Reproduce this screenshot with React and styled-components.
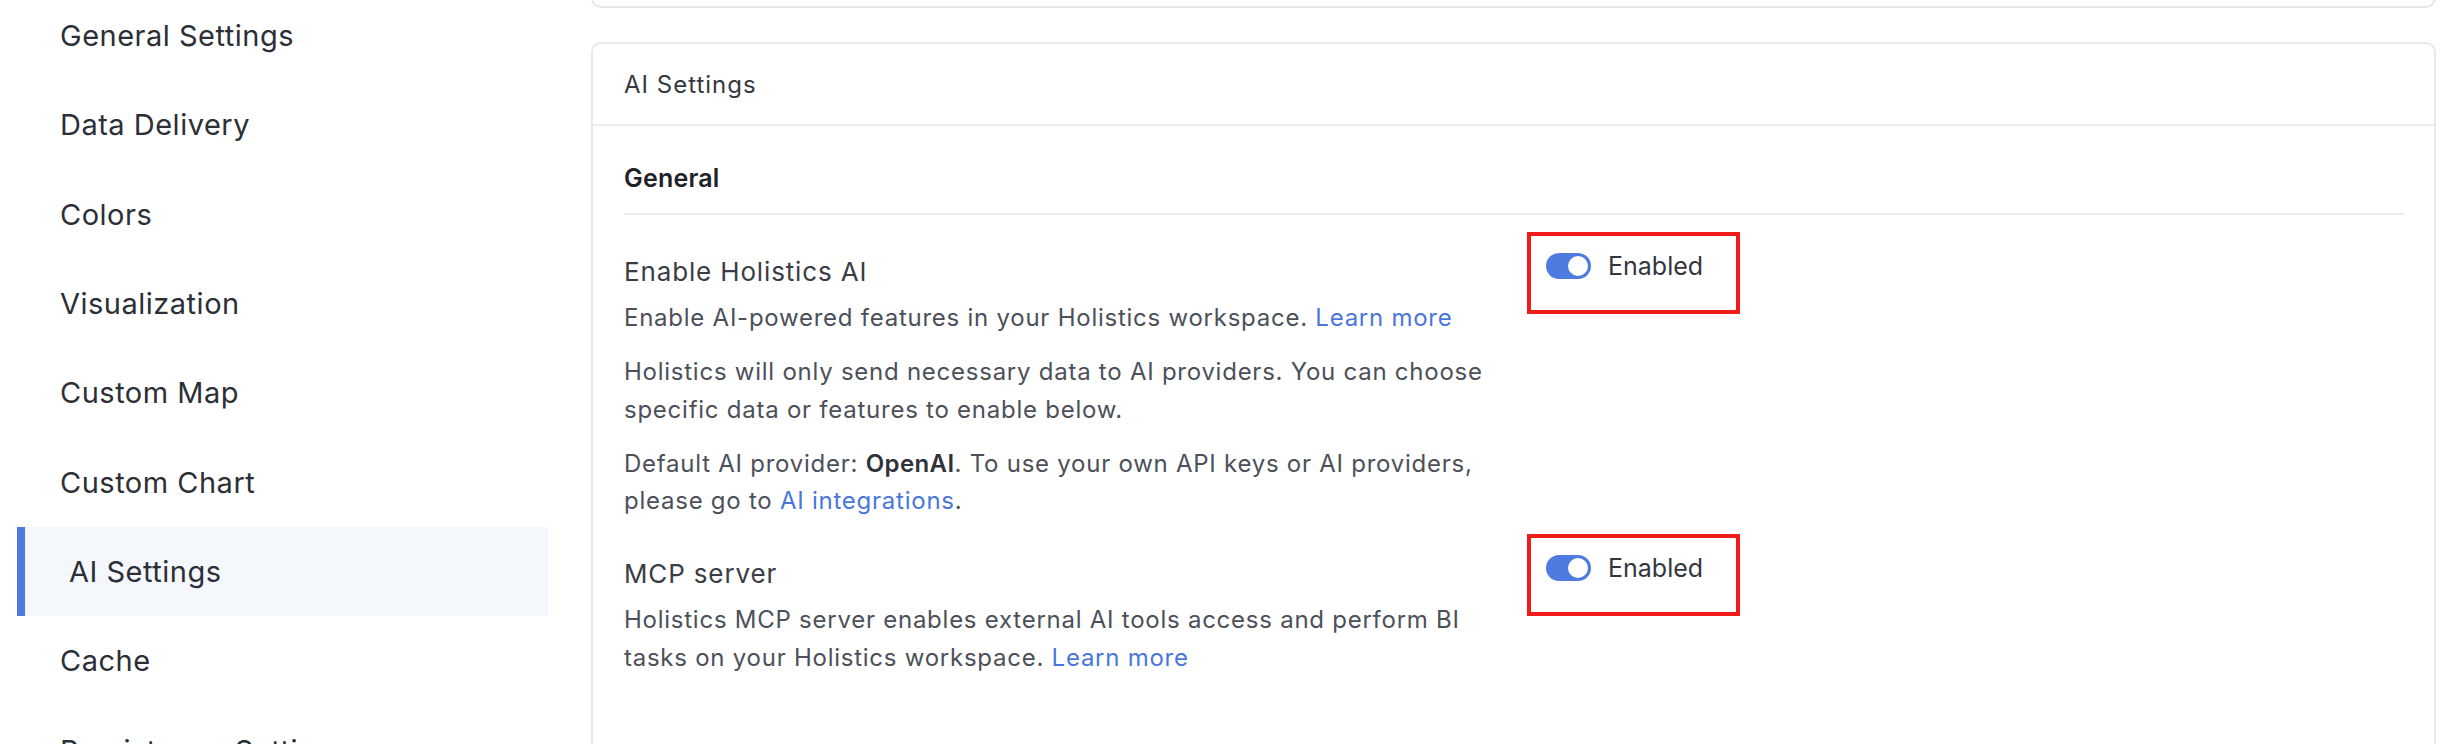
import React from 'react';
import styled, { createGlobalStyle } from 'styled-components';

const GlobalStyle = createGlobalStyle`
  html, body {
    margin: 0;
    padding: 0;
    background: #ffffff;
    overflow: hidden;
  }
  body {
    font-family: Inter, "Noto Sans", "Liberation Sans", sans-serif;
    -webkit-font-smoothing: antialiased;
  }
`;

const Page = styled.div`
  display: flex;
  align-items: flex-start;
  width: 2464px;
  height: 744px;
  overflow: hidden;
`;

const Sidebar = styled.nav`
  width: 531px;
  margin-left: 17px;
  margin-top: -9px;
  display: flex;
  flex-direction: column;
  flex-shrink: 0;
`;

const NavItem = styled.a`
  height: 89.3px;
  display: flex;
  align-items: center;
  box-sizing: border-box;
  padding-left: ${p => (p.$active ? '44px' : '43px')};
  border-left: ${p => (p.$active ? '8px solid #4f79e0' : 'none')};
  background: ${p => (p.$active ? '#f4f7fc' : 'transparent')};
  color: #2c2f36;
  font-size: 29px;
  letter-spacing: 0.5px;
  text-decoration: none;
  white-space: nowrap;
`;

const Main = styled.main`
  margin-left: 43px;
  width: 1845px;
  display: flex;
  flex-direction: column;
  flex-shrink: 0;
`;

const TopCard = styled.div`
  height: 20px;
  margin-top: -16px;
  border: 2px solid #e7e7e7;
  border-radius: 10px;
`;

const Card = styled.section`
  margin-top: 34px;
  border: 2px solid #e8e8e8;
  border-radius: 10px;
  min-height: 900px;
`;

const CardHeader = styled.header`
  height: 80px;
  display: flex;
  align-items: center;
  padding-left: 31px;
  border-bottom: 2px solid #ebebeb;
  font-size: 24px;
  letter-spacing: 1px;
  color: #35383f;
`;

const CardBody = styled.div`
  padding: 0 30px 0 31px;
`;

const SectionTitle = styled.h3`
  margin: 0;
  padding: 38px 0 21px;
  line-height: 28px;
  font-size: 25px;
  font-weight: 600;
  letter-spacing: 0.2px;
  color: #1f2228;
  border-bottom: 2px solid #ededed;
`;

const SettingRow = styled.div`
  display: flex;
  align-items: flex-start;
  margin-top: ${p => (p.$first ? '39px' : '37px')};
`;

const TextCol = styled.div`
  width: 880px;
  flex-shrink: 0;
`;

const SettingTitle = styled.div`
  font-size: 26px;
  line-height: 36px;
  letter-spacing: 0.85px;
  color: #3a3d45;
  margin-bottom: 9px;
`;

const Desc = styled.p`
  margin: 0 0 17px;
  font-size: 24px;
  line-height: 37.3px;
  letter-spacing: 0.75px;
  color: #4c5059;
  &:last-child {
    margin-bottom: 0;
  }
  b {
    font-weight: 600;
    letter-spacing: 0.4px;
    color: #2f3238;
  }
`;

const Link = styled.a`
  color: #4a76dc;
  text-decoration: none;
`;

const Highlight = styled.div`
  margin-left: 23px;
  margin-top: -22px;
  padding: 17px 33px 31px 15px;
  border: 4px solid #f21b1b;
  display: flex;
  align-items: center;
  gap: 17px;
`;

const Switch = styled.span`
  width: 45px;
  height: 26px;
  border-radius: 13px;
  background: #4f7ae0;
  display: flex;
  align-items: center;
  justify-content: flex-end;
  padding-right: 3px;
  box-sizing: border-box;
  &::after {
    content: '';
    width: 20px;
    height: 20px;
    border-radius: 50%;
    background: #ffffff;
  }
`;

const SwitchLabel = styled.span`
  font-size: 25px;
  line-height: 26px;
  color: #33363d;
`;

const navItems = [
  'General Settings',
  'Data Delivery',
  'Colors',
  'Visualization',
  'Custom Map',
  'Custom Chart',
  'AI Settings',
  'Cache',
  'Persistence Settings',
];

const Toggle = () => (
  <Highlight>
    <Switch />
    <SwitchLabel>Enabled</SwitchLabel>
  </Highlight>
);

const App = () => (
  <>
    <GlobalStyle />
    <Page>
      <Sidebar>
        {navItems.map(item => (
          <NavItem key={item} $active={item === 'AI Settings'}>
            {item}
          </NavItem>
        ))}
      </Sidebar>

      <Main>
        <TopCard />
        <Card>
          <CardHeader>AI Settings</CardHeader>
          <CardBody>
            <SectionTitle>General</SectionTitle>

            <SettingRow $first>
              <TextCol>
                <SettingTitle>Enable Holistics AI</SettingTitle>
                <Desc>
                  Enable AI-powered features in your Holistics workspace.{' '}
                  <Link>Learn more</Link>
                </Desc>
                <Desc>
                  Holistics will only send necessary data to AI providers. You can
                  choose specific data or features to enable below.
                </Desc>
                <Desc>
                  Default AI provider: <b>OpenAI</b>. To use your own API keys or AI
                  providers, please go to <Link>AI integrations</Link>.
                </Desc>
              </TextCol>
              <Toggle />
            </SettingRow>

            <SettingRow>
              <TextCol>
                <SettingTitle>MCP server</SettingTitle>
                <Desc>
                  Holistics MCP server enables external AI tools access and perform
                  BI tasks on your Holistics workspace. <Link>Learn more</Link>
                </Desc>
              </TextCol>
              <Toggle />
            </SettingRow>
          </CardBody>
        </Card>
      </Main>
    </Page>
  </>
);

export default App;
